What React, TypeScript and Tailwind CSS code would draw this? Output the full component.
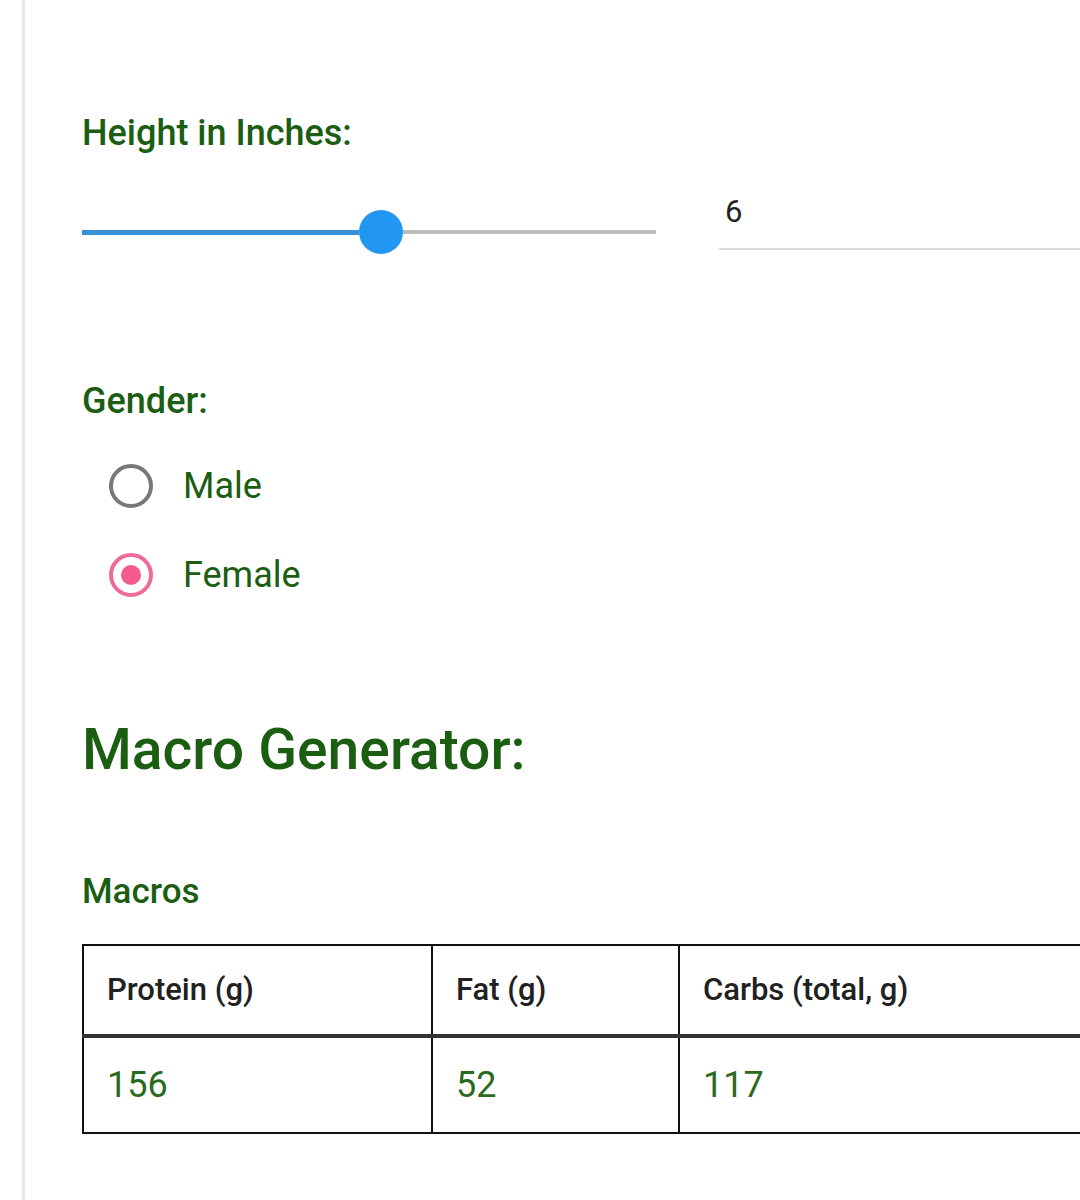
import React from 'react';

const green = 'text-[#1b5e12]';

function Radio({ label, checked }: { label: string; checked?: boolean }) {
  return (
    <div className="flex h-[60px] items-center">
      <div className="ml-[26px] flex h-[46px] w-[46px] items-center justify-center">
        {checked ? (
          <div className="flex h-[44px] w-[44px] items-center justify-center rounded-full border-[4px] border-[#ee6b9a]">
            <div className="h-[20px] w-[20px] rounded-full bg-[#f45a8c]" />
          </div>
        ) : (
          <div className="h-[44px] w-[44px] rounded-full border-[4px] border-[#787878]" />
        )}
      </div>
      <span className={`ml-[29px] text-[36px] leading-[40px] ${green}`}>{label}</span>
    </div>
  );
}

export default function App() {
  return (
    <div
      className="min-h-[1200px] w-[1080px] overflow-hidden bg-white pl-[22px]"
      style={{ fontFamily: 'Roboto, "Noto Sans", sans-serif' }}
    >
      <div className="min-h-[1200px] border-l-[3px] border-[#e8e8e8] pl-[57px] pt-[112px]">
        <div className={`text-[36px] font-medium leading-[42px] ${green}`}>Height in Inches:</div>

        {/* slider + value */}
        <div className="mt-[36px] flex items-start">
          <div className="w-[574px] pt-[20px]">
            <div className="flex h-[44px] items-center">
              <div className="h-[5px] w-[277px] bg-[#3592d8]" />
              <div className="h-[44px] w-[44px] shrink-0 rounded-full bg-[#2196f3]" />
              <div className="h-[4px] flex-1 bg-[#bdbdbd]" />
            </div>
          </div>
          <div className="ml-[63px] flex-1 border-b-2 border-[#dcdcdc] pb-[14px] pl-[6px] text-[31px] leading-[44px] text-[#222]">
            6
          </div>
        </div>

        <div className={`mt-[126px] text-[36px] font-medium leading-[42px] ${green}`}>Gender:</div>
        <div className="mt-[34px] flex flex-col gap-[29px]">
          <Radio label="Male" />
          <Radio label="Female" checked />
        </div>

        <h1 className={`mt-[111px] text-[57px] font-medium leading-[68px] ${green}`}>Macro Generator:</h1>
        <h3 className={`mt-[88px] text-[35px] font-medium leading-[40px] ${green}`}>Macros</h3>

        <table className="mt-[32px] w-[1150px] table-fixed border-collapse">
          <colgroup>
            <col className="w-[349px]" />
            <col className="w-[247px]" />
            <col />
          </colgroup>
          <thead>
            <tr>
              {['Protein (g)', 'Fat (g)', 'Carbs (total, g)'].map((h) => (
                <th
                  key={h}
                  className="h-[91px] border-2 border-b-4 border-[#111] border-b-[#333] px-[23px] text-left text-[31px] font-medium text-[#212121]"
                >
                  {h}
                </th>
              ))}
            </tr>
          </thead>
          <tbody>
            <tr>
              {['156', '52', '117'].map((v) => (
                <td
                  key={v}
                  className="h-[97px] border-2 border-[#111] px-[23px] text-[36px] text-[#2b6a1e]"
                >
                  {v}
                </td>
              ))}
            </tr>
          </tbody>
        </table>
      </div>
    </div>
  );
}
